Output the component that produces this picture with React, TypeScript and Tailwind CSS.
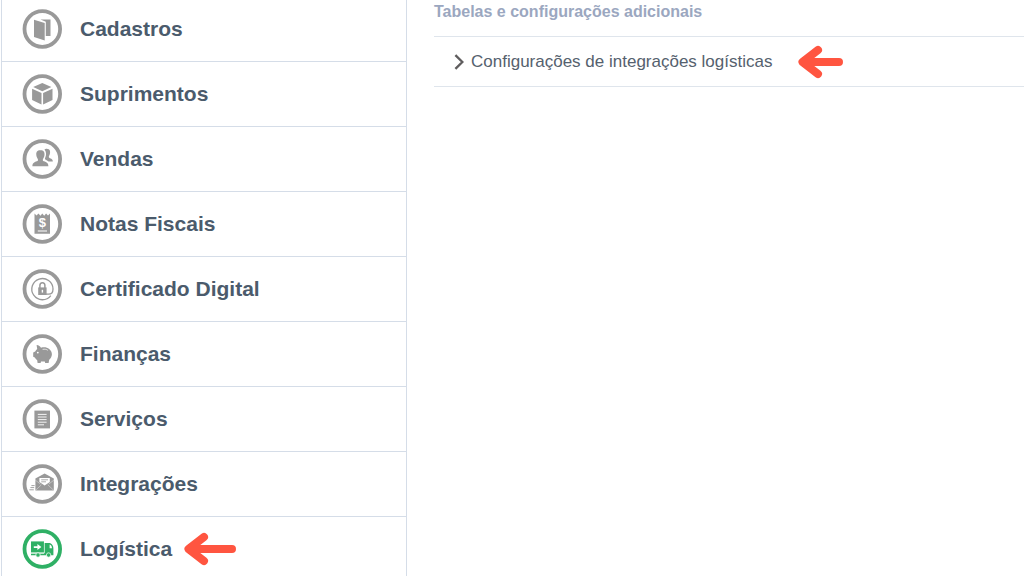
import type { ReactNode } from "react";
import clsx from "clsx";

type MenuItem = {
    label: string;
    icon: ReactNode;
    active?: boolean;
};

const menu: MenuItem[] = [
    {
        label: "Cadastros",
        icon: (
            <>
                <path d="M12 10.8 L22.7 14 V31.4 L12 28 Z" fill="currentColor" />
                <path d="M18.5 10.6 H28.5 V27 H23.8 V12.8 Z" fill="currentColor" />
            </>
        ),
    },
    {
        label: "Suprimentos",
        icon: (
            <path
                d="M20.3 9 L29.4 13 L20.3 17.2 L11.2 13 Z M10.1 14.8 L19.5 19.1 V30.5 L10.1 26 Z M21.1 19.1 L30.5 14.8 V26 L21.1 30.5 Z"
                fill="currentColor"
            />
        ),
    },
    {
        label: "Vendas",
        icon: (
            <>
                <path
                    d="M22.5 10.5 C23.5 9.2 27.5 9.2 28 12 C28.3 14 27.8 15.6 27 17 C26.6 18 26.8 18.8 28 19.3 C30 20 30.8 20.8 30.8 22.4 H26.5 C25.6 21.6 24.6 21 23.3 20.4 C22.8 19.8 23 19 23.4 18.2 C24.5 15.5 24.3 12.8 22.5 10.5 Z"
                    fill="currentColor"
                />
                <path
                    d="M18.4 11.3 C21.8 11.3 22.7 13.4 22.5 15.8 C22.4 17.6 21.8 18.8 21 19.9 C20.6 21 20.8 21.8 21.9 22.2 C24.8 23.2 26.4 24 26.4 27.2 H10.4 C10.4 24 12 23.2 14.9 22.2 C16 21.8 16.2 21 15.8 19.9 C15 18.8 14.4 17.6 14.3 15.8 C14.1 13.4 15 11.3 18.4 11.3 Z"
                    fill="currentColor"
                />
            </>
        ),
    },
    {
        label: "Notas Fiscais",
        icon: (
            <>
                <path
                    d="M12.5 9.6 L14.5 11.4 L16.5 9.6 L18.4 11.8 L20.3 9.6 L22.2 11.8 L24.1 9.6 L26 11.4 L28 9.6 V29.8 H12.5 Z"
                    fill="currentColor"
                />
                <text x="20.3" y="23" fontSize="13" fontWeight="bold" textAnchor="middle" fill="#fff">
                    $
                </text>
                <path d="M15.8 27 H25" stroke="#fff" strokeWidth="1" />
            </>
        ),
    },
    {
        label: "Certificado Digital",
        icon: (
            <>
                <path
                    d="M28.8 26.6 A10.6 10.6 0 1 1 31 20 C31 23.2 29.2 25.2 26.6 25.2 H24"
                    stroke="currentColor"
                    strokeWidth="1.3"
                    fill="none"
                />
                <path
                    d="M17.9 19 V16.6 A2.5 2.8 0 0 1 22.9 16.6 V19"
                    stroke="currentColor"
                    strokeWidth="1.5"
                    fill="none"
                />
                <path d="M16.2 18.4 H24.6 V26 H16.2 Z" fill="currentColor" />
                <path d="M20.4 20.8 V23.6" stroke="#fff" strokeWidth="1.4" />
            </>
        ),
    },
    {
        label: "Finanças",
        icon: (
            <>
                <path
                    d="M14.6 11 C16.8 11.3 18.2 12.3 19 13.8 C21.6 13 25 13.2 27.2 15 C29 16.4 30 18.4 29.9 20.6 C29.8 22.8 28.6 24.6 27.2 25.8 L26.6 29 H23.2 L22.8 27.4 H19 L18.6 29 H15.6 L15.2 26.2 C14.2 25.4 13.4 24.6 12.8 23.6 L11.2 22.8 V18.4 L13.2 17.6 C13.8 16.4 14.6 15.6 15.2 15 Z"
                    fill="currentColor"
                />
                <circle cx="15.8" cy="18.6" r="0.9" fill="#fff" />
                <path d="M20.6 15.4 C22.6 14.9 24.4 15.3 25.8 16.3" stroke="#fff" strokeWidth="0.7" fill="none" />
            </>
        ),
    },
    {
        label: "Serviços",
        icon: (
            <>
                <path d="M12.4 11.6 H28 V29.4 H12.4 Z" fill="currentColor" />
                <path
                    d="M15.8 15.4 H24.6 M15.8 18 H24.6 M15.8 20.6 H24.6 M15.8 23.2 H24.6 M15.8 25.8 H22"
                    stroke="#fff"
                    strokeWidth="0.9"
                />
            </>
        ),
    },
    {
        label: "Integrações",
        icon: (
            <>
                <path d="M13.4 14.6 L22.6 9.6 L31.8 14.6 V26.4 H13.4 Z" fill="currentColor" />
                <path d="M17.4 14 H27.8 V18 L22.6 21.4 L17.4 18 Z" fill="#fff" />
                <path d="M19.2 15.8 H26 M19.2 17.8 H24" stroke="currentColor" strokeWidth="0.8" />
                <path
                    d="M13.4 16.2 L18.4 20 M31.8 16.2 L26.8 20 M13.6 26.2 L19.4 20.8 M31.6 26.2 L25.8 20.8"
                    stroke="#fff"
                    strokeWidth="0.4"
                />
                <path
                    d="M9.4 21.6 H12.6 M8.4 23.6 H12.2 M7.4 25.8 H11.8"
                    stroke="currentColor"
                    strokeWidth="0.9"
                />
            </>
        ),
    },
    {
        label: "Logística",
        active: true,
        icon: (
            <>
                <path d="M9 12.4 H22 V23.6 H9 Z" fill="currentColor" />
                <path
                    d="M9 24.6 H22 V14 H27 C29.6 14 31.4 16.6 31.4 19.4 V26.2 H9 Z"
                    fill="currentColor"
                />
                <path d="M22.4 13 V24 M9 24.1 H22.4" stroke="#fff" strokeWidth="0.7" />
                <path d="M27.6 15.6 C29 16 29.9 17.4 30 19.2 H27.6 Z" fill="#fff" />
                <path d="M11.8 17.2 H15.4 V15 L19.4 18 L15.4 21 V18.9 H11.8 Z" fill="#fff" />
                <circle cx="16" cy="26" r="2.2" fill="currentColor" stroke="#fff" strokeWidth="0.7" />
                <circle cx="26.6" cy="26" r="2.2" fill="currentColor" stroke="#fff" strokeWidth="0.7" />
            </>
        ),
    },
];

const MenuIcon = ({ children }: { children: ReactNode }) => (
    <svg viewBox="0 0 40 40" className="size-10 shrink-0" aria-hidden="true">
        <circle cx="20.3" cy="20" r="17.8" fill="none" stroke="currentColor" strokeWidth="3.8" />
        {children}
    </svg>
);

const Arrow = ({ length, className }: { length: number; className?: string }) => (
    <svg
        width={length}
        height={34}
        viewBox={`0 0 ${length} 34`}
        className={clsx("shrink-0 text-[#ff5540]", className)}
        aria-hidden="true"
    >
        <path
            d={`M${length - 4} 17 H6 M20 5 L4.5 17 L20 29 M12 14 V20`}
            fill="none"
            stroke="currentColor"
            strokeWidth="8"
            strokeLinecap="round"
            strokeLinejoin="round"
        />
    </svg>
);

const Sidebar = () => (
    <nav className="-mt-[3px] ml-px w-[406px] shrink-0 border-x border-[#d5dde8]">
        <ul>
            {menu.map((item) => (
                <li key={item.label} className="border-b border-[#d5dde8]">
                    <a href="#" className="flex h-16 items-center pl-5">
                        <span className={item.active ? "text-[#2fb065]" : "text-[#999999]"}>
                            <MenuIcon>{item.icon}</MenuIcon>
                        </span>
                        <span className="ml-[18px] text-[21px] font-bold text-[#4b5b6c]">{item.label}</span>
                        {item.active && <Arrow length={52} className="ml-3" />}
                    </a>
                </li>
            ))}
        </ul>
    </nav>
);

const App = () => {
    return (
        <div className="flex h-screen overflow-hidden bg-white font-['Liberation_Sans',Arial,sans-serif]">
            <Sidebar />
            <main className="ml-[27px] min-w-0 flex-1">
                <h2 className="h-9 text-base leading-6 font-bold text-[#9ba7c0]">
                    Tabelas e configurações adicionais
                </h2>
                <div className="flex h-[51px] items-center border-y border-[#dfe5ec] pl-5">
                    <a href="#" className="flex items-center gap-[7px] text-[17px] text-[#55616e]">
                        <svg viewBox="0 0 10 16" className="h-4 w-[10px]" aria-hidden="true">
                            <path d="M1.4 1.2 L8.4 8 L1.4 14.8" fill="none" stroke="#5f5d5e" strokeWidth="2.4" />
                        </svg>
                        Configurações de integrações logísticas
                    </a>
                    <Arrow length={45} className="ml-[26px]" />
                </div>
            </main>
        </div>
    );
};

export default App;
